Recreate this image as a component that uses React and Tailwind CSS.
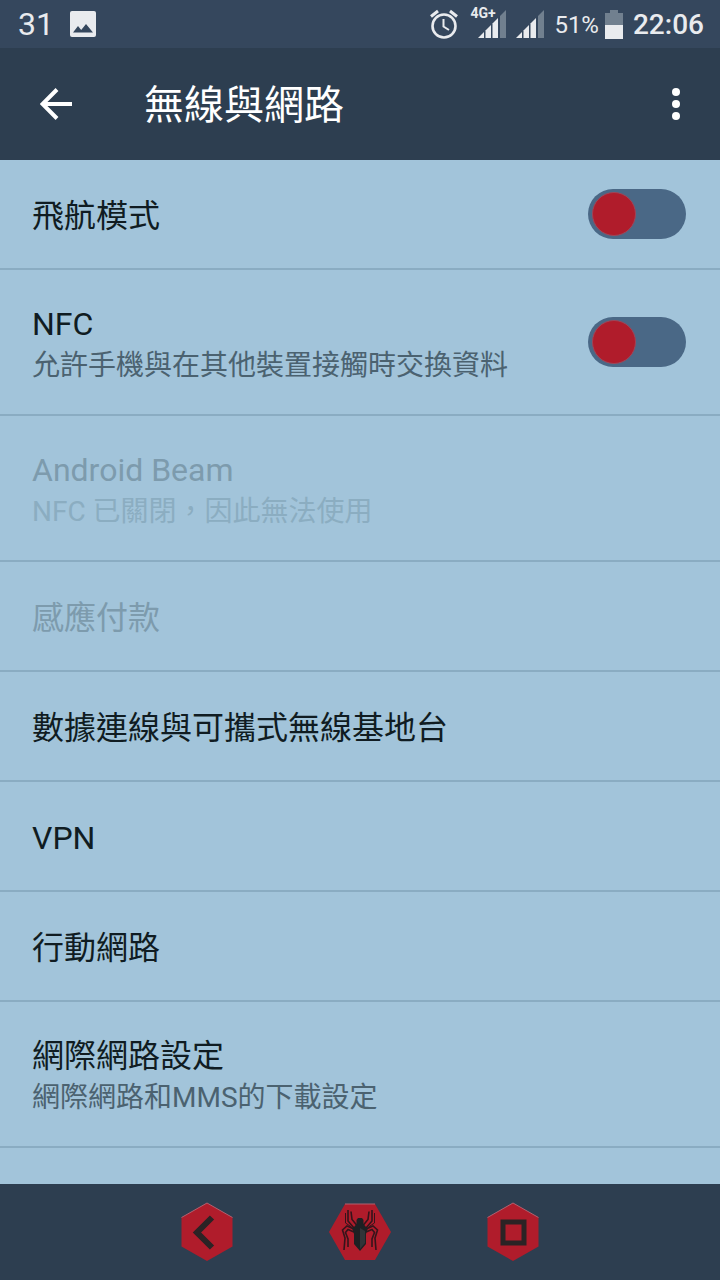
import { useState } from 'react';

const ITEMS = [
  { id: 'airplane', title: '飛航模式', toggle: true },
  { id: 'nfc', title: 'NFC', summary: '允許手機與在其他裝置接觸時交換資料', toggle: true },
  { id: 'beam', title: 'Android Beam', summary: 'NFC 已關閉，因此無法使用', disabled: true },
  { id: 'tap-pay', title: '感應付款', disabled: true },
  { id: 'tether', title: '數據連線與可攜式無線基地台' },
  { id: 'vpn', title: 'VPN' },
  { id: 'mobile', title: '行動網路' },
  { id: 'internet', title: '網際網路設定', summary: '網際網路和MMS的下載設定' },
];

function PhotoIcon() {
  return (
    <svg width="26" height="26" viewBox="0 0 26 26">
      <rect width="26" height="26" rx="2" fill="#e9ebee" />
      <path d="M3 21.5l5-6.5 3.2 4L16 13l7 8.5z" fill="#35475d" />
    </svg>
  );
}

function AlarmIcon() {
  return (
    <svg width="28" height="30" viewBox="0 0 28 30" fill="none" stroke="#e9ebee">
      <circle cx="14" cy="17" r="11.5" strokeWidth="2.6" />
      <path d="M1 7.5L8 2M27 7.5L20 2" strokeWidth="3" />
      <path d="M13.5 10v7.5l5.5 3.5" strokeWidth="2" />
    </svg>
  );
}

function SignalIcon() {
  return (
    <svg width="28" height="28" viewBox="0 0 28 28">
      <g fill="#e9ebee">
        <path d="M0 28l6-6v6z" />
        <path d="M7.5 20.5L13 15v13H7.5z" />
        <path d="M14.5 13.5L20 8v20h-5.500z" />
      </g>
      <path d="M22 6l6-6v28h-6z" fill="#71808f" />
    </svg>
  );
}

function BatteryIcon() {
  return (
    <svg width="18" height="29" viewBox="0 0 18 29">
      <path d="M0 3h5V0h8v3h5v12H0z" fill="#71808f" />
      <path d="M0 15h18v14H0z" fill="#e9ebee" />
    </svg>
  );
}

function StatusBar() {
  return (
    <div className="flex h-12 shrink-0 items-center justify-between bg-[#35475d] pr-4 pl-[18px] text-[#e9ebee]">
      <div className="flex items-center gap-4">
        <span className="text-[32px] leading-[48px]">31</span>
        <PhotoIcon />
      </div>
      <div className="flex items-center">
        <AlarmIcon />
        <div className="relative ml-5">
          <SignalIcon />
          <span className="absolute -top-1 -left-2 text-sm leading-none font-bold">4G+</span>
        </div>
        <div className="ml-[10px]">
          <SignalIcon />
        </div>
        <span className="ml-[10px] pt-0.5 text-2xl">51%</span>
        <div className="ml-1.5">
          <BatteryIcon />
        </div>
        <span className="ml-[10px] pt-0.5 text-[28px] font-medium">22:06</span>
      </div>
    </div>
  );
}

function Header() {
  return (
    <header className="flex h-28 shrink-0 items-center bg-[#2d3e50] pr-8 pl-10 text-white">
      <button type="button" aria-label="返回">
        <svg width="32" height="32" viewBox="0 0 32 32" fill="none" stroke="currentColor" strokeWidth="4">
          <path d="M32 16H3M17 1.5L2.500 16 17 30.500" />
        </svg>
      </button>
      <h1 className="ml-[72px] flex-1 pt-1 text-[40px] leading-[48px]">無線與網路</h1>
      <button type="button" aria-label="更多選項" className="px-2">
        <svg width="8" height="32" viewBox="0 0 8 32" fill="currentColor">
          <circle cx="4" cy="4" r="4" />
          <circle cx="4" cy="16" r="4" />
          <circle cx="4" cy="28" r="4" />
        </svg>
      </button>
    </header>
  );
}

function Switch({ id, checked, onChange }) {
  return (
    <input
      id={id}
      type="checkbox"
      role="switch"
      checked={checked}
      onChange={onChange}
      className="h-[50px] w-[98px] shrink-0 appearance-none rounded-full bg-[#4a6886] px-1 py-[3px] before:block before:size-11 before:rounded-full before:border before:border-[#a04557] before:bg-[#b01c2b] checked:before:ml-auto"
    />
  );
}

function Row({ item, checked, onToggle }) {
  const titleColor = item.disabled ? 'text-[#7d9bad]' : 'text-[#101c22]';
  const summaryColor = item.disabled ? 'text-[#8badc1]' : 'text-[#4b6270]';
  const pad = item.summary ? 'pt-2' : 'pt-1';
  const text = (
    <>
      <span className={`block text-[32px] leading-10 ${titleColor}`}>{item.title}</span>
      {item.summary && (
        <span className={`block text-[28px] leading-[44px] ${summaryColor}`}>{item.summary}</span>
      )}
    </>
  );

  return (
    <li
      className={`flex shrink-0 items-center justify-between border-b-2 border-[#8aacc2] pr-[34px] pl-8 ${
        item.summary ? 'h-[146px]' : 'h-[110px]'
      }`}
    >
      {item.toggle ? (
        <>
          <label htmlFor={item.id} className={`flex-1 ${pad}`}>{text}</label>
          <Switch id={item.id} checked={checked} onChange={onToggle} />
        </>
      ) : (
        <button type="button" disabled={item.disabled} className={`flex-1 text-left ${pad}`}>{text}</button>
      )}
    </li>
  );
}

function BackKey() {
  return (
    <svg width="54" height="60" viewBox="0 0 54 60">
      <path d="M27 1l25.5 14.5v29L27 59 1.5 44.5v-29z" fill="#b01c2b" />
      <path d="M1.5 15.5L27 1l25.5 14.5" fill="none" stroke="#b2606f" />
      <path d="M32 15.5L17 30.500l15 15" fill="none" stroke="#2b2325" strokeWidth="6" />
    </svg>
  );
}

function SpiderLegs() {
  return (
    <>
      <path d="M23 8.5l1 8 5 6" />
      <path d="M20 7v11l6 7" />
      <path d="M17.500 10v10l6 4" strokeWidth="1" />
      <path d="M26 26l-7-3-4.500 4 2.500 8-1 12" />
      <path d="M26 29l-6-2.500-2.500 3L20 36v8" />
    </>
  );
}

function HomeKey() {
  return (
    <svg width="64" height="58" viewBox="0 0 64 58">
      <path d="M17 1h30l16 28-16 28H17L1 29z" fill="#b01c2b" />
      <path d="M17 1h30" stroke="#b2606f" />
      <g fill="none" stroke="#35141b" strokeWidth="1.6">
        <SpiderLegs />
        <g transform="translate(64 0) scale(-1 1)">
          <SpiderLegs />
        </g>
      </g>
      <path d="M30 15h4l1.500 2v4l2.500 3 2 1-2 6v10l-6 7-6-7V31l-2-6 2-1 2.500-3v-4z" fill="#1d2023" />
      <path d="M32 25l5 3v12l-5 6z" fill="#303438" />
    </svg>
  );
}

function RecentKey() {
  return (
    <svg width="54" height="60" viewBox="0 0 54 60">
      <path d="M27 1l25.5 14.5v29L27 59 1.5 44.5v-29z" fill="#b01c2b" />
      <path d="M1.5 15.5L27 1l25.5 14.5" fill="none" stroke="#b2606f" />
      <rect x="17" y="20" width="21" height="21" fill="none" stroke="#2b2325" strokeWidth="5" />
    </svg>
  );
}

function NavBar() {
  return (
    <nav className="flex h-24 shrink-0 items-center justify-center gap-[94px] bg-[#2d3e50]">
      <button type="button" aria-label="上一頁"><BackKey /></button>
      <button type="button" aria-label="主畫面"><HomeKey /></button>
      <button type="button" aria-label="最近使用"><RecentKey /></button>
    </nav>
  );
}

export default function App() {
  const [enabled, setEnabled] = useState({ airplane: false, nfc: false });

  const toggle = (id) => setEnabled((prev) => ({ ...prev, [id]: !prev[id] }));

  return (
    <div className="flex h-screen flex-col bg-[#a2c4da] font-[Roboto,'Noto_Sans_CJK_TC',sans-serif]">
      <StatusBar />
      <Header />
      <main className="min-h-0 flex-1 overflow-hidden">
        <ul>
          {ITEMS.map((item) => (
            <Row
              key={item.id}
              item={item}
              checked={!!enabled[item.id]}
              onToggle={() => toggle(item.id)}
            />
          ))}
        </ul>
      </main>
      <NavBar />
    </div>
  );
}
